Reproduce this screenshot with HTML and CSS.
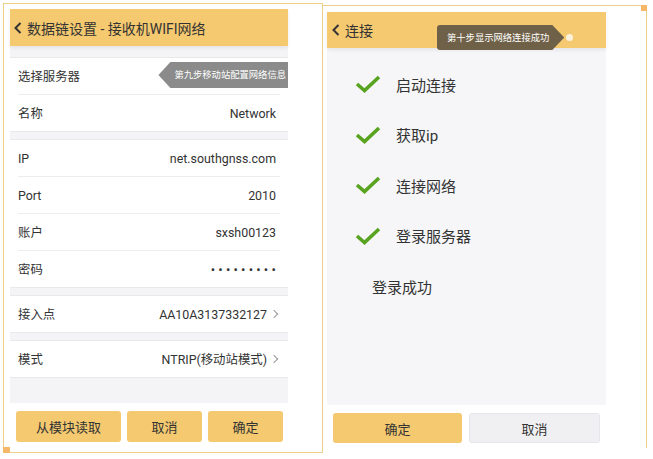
FILE: index.html
```html
<!DOCTYPE html>
<html lang="zh-CN">
<head>
    <meta charset="UTF-8">
    <meta name="viewport" content="width=device-width, initial-scale=1.0">
    <title>接收机WIFI网络</title>
    <link rel="stylesheet" href="styles.css">
</head>
<body>
    <div class="frame frame-left">
        <div class="screen">
            <div class="header">
                <svg class="back" width="8" height="12" viewBox="0 0 8 12"><polyline points="6.5,1 1.5,6 6.5,11" fill="none" stroke="#333" stroke-width="2"/></svg>
                <span>数据链设置 - 接收机WIFI网络</span>
            </div>
            <div class="gap gap-top"></div>
            <div class="section">
                <div class="row tip-row">
                    <span>选择服务器</span>
                    <div class="tip tip-gray">第九步移动站配置网络信息</div>
                </div>
                <div class="row"><span>名称</span><span>Network</span></div>
            </div>
            <div class="gap"></div>
            <div class="section">
                <div class="row"><span>IP</span><span>net.southgnss.com</span></div>
                <div class="row"><span>Port</span><span>2010</span></div>
                <div class="row"><span>账户</span><span>sxsh00123</span></div>
                <div class="row"><span>密码</span><span class="dots">•••••••••</span></div>
            </div>
            <div class="gap"></div>
            <div class="section">
                <div class="row"><span>接入点</span><span class="link">AA10A3137332127 <i class="arrow"></i></span></div>
            </div>
            <div class="gap"></div>
            <div class="section">
                <div class="row"><span>模式</span><span class="link">NTRIP(移动站模式) <i class="arrow"></i></span></div>
            </div>
            <div class="gap gap-bottom"></div>
            <div class="buttons">
                <button class="btn btn-read">从模块读取</button>
                <button class="btn btn-small">取消</button>
                <button class="btn btn-small">确定</button>
            </div>
        </div>
    </div>

    <div class="frame frame-right">
        <div class="screen">
            <div class="header">
                <svg class="back" width="8" height="12" viewBox="0 0 8 12"><polyline points="6.5,1 1.5,6 6.5,11" fill="none" stroke="#333" stroke-width="2"/></svg>
                <span>连接</span>
                <div class="tip tip-dark">第十步显示网络连接成功</div>
                <i class="dot"></i>
            </div>
            <div class="steps">
                <div class="step">
                    <svg class="check" width="26" height="18" viewBox="0 0 26 18"><polyline points="2,9 9.5,15.5 24,2" fill="none" stroke="#58a31f" stroke-width="3.6"/></svg>
                    <span>启动连接</span>
                </div>
                <div class="step">
                    <svg class="check" width="26" height="18" viewBox="0 0 26 18"><polyline points="2,9 9.5,15.5 24,2" fill="none" stroke="#58a31f" stroke-width="3.6"/></svg>
                    <span>获取ip</span>
                </div>
                <div class="step">
                    <svg class="check" width="26" height="18" viewBox="0 0 26 18"><polyline points="2,9 9.5,15.5 24,2" fill="none" stroke="#58a31f" stroke-width="3.6"/></svg>
                    <span>连接网络</span>
                </div>
                <div class="step">
                    <svg class="check" width="26" height="18" viewBox="0 0 26 18"><polyline points="2,9 9.5,15.5 24,2" fill="none" stroke="#58a31f" stroke-width="3.6"/></svg>
                    <span>登录服务器</span>
                </div>
                <div class="step step-done"><span>登录成功</span></div>
            </div>
            <div class="buttons">
                <button class="btn btn-ok">确定</button>
                <button class="btn btn-cancel">取消</button>
            </div>
        </div>
    </div>
</body>
</html>
```

FILE: styles.css
```css
body {
    margin: 0;
    background-color: #fff;
    font-family: Roboto, "Noto Sans CJK SC", sans-serif;
    color: #333;
    display: flex;
    align-items: flex-start;
}
.frame {
    position: relative;
    box-sizing: border-box;
    border: 1px solid #ead08a;
}
.frame-left {
    width: 320px;
    height: 450px;
    margin: 3px 0 0 3px;
    padding: 5px 0 0 6px;
}
.frame-left::after {
    content: "";
    position: absolute;
    left: -1px;
    bottom: -1px;
    width: 7px;
    height: 6px;
    background-color: #f6b868;
}
.frame-right {
    width: 324px;
    height: 443px;
    margin-top: 5px;
    border-left: none;
    border-bottom: none;
    padding: 6px 0 0 4px;
}
.frame-right::after {
    content: "";
    position: absolute;
    right: -1px;
    top: -1px;
    width: 6px;
    height: 6px;
    background-color: #f6b868;
}
.screen {
    width: 278px;
    display: flex;
    flex-direction: column;
}
.frame-right .screen {
    width: 279px;
}
.header {
    position: relative;
    height: 37px;
    background-color: #f4c96f;
    display: flex;
    align-items: center;
    padding-left: 4px;
    font-size: 14px;
    color: #333;
    box-shadow: 0 2px 4px rgba(0, 0, 0, 0.07);
    z-index: 1;
}
.header .back {
    margin-right: 5px;
}
.frame-right .header {
    height: 36px;
    padding-left: 5px;
}
.gap {
    height: 7px;
    background-color: #f4f4f6;
}
.gap-top {
    height: 11px;
}
.gap-bottom {
    height: 25px;
}
.section {
    background-color: #fff;
    border-top: 1px solid #e9e9ec;
    border-bottom: 1px solid #e9e9ec;
}
.row {
    position: relative;
    height: 36px;
    margin: 0 8px;
    padding-right: 4px;
    display: flex;
    align-items: center;
    justify-content: space-between;
    font-size: 12.4px;
    color: #333;
    border-bottom: 1px solid #ededf0;
}
.row:last-child {
    border-bottom: none;
}
.dots {
    font-size: 13px;
    letter-spacing: 3.2px;
    margin-right: -3px;
}
.link {
    display: flex;
    align-items: center;
    margin-right: -3px;
}
.arrow {
    display: inline-block;
    width: 5px;
    height: 5px;
    margin-left: 4px;
    margin-right: 2px;
    border-top: 1px solid #999;
    border-right: 1px solid #999;
    transform: rotate(45deg);
}
.tip {
    position: absolute;
    color: #fff;
    font-size: 9.3px;
    white-space: nowrap;
}
.tip-gray {
    right: -8px;
    top: 4px;
    height: 26px;
    line-height: 26px;
    padding: 0 2px 0 16px;
    background-color: #8b8b8b;
    clip-path: polygon(12px 0, 100% 0, 100% 100%, 12px 100%, 0 50%);
}
.tip-dark {
    left: 110px;
    top: 13px;
    height: 25px;
    line-height: 25px;
    padding: 0 15px 0 10px;
    background-color: #6f6148;
    border-radius: 3px 0 0 3px;
    clip-path: polygon(0 0, calc(100% - 12px) 0, 100% 50%, calc(100% - 12px) 100%, 0 100%);
}
.dot {
    position: absolute;
    left: 239px;
    top: 22px;
    width: 7px;
    height: 7px;
    border-radius: 50%;
    background-color: #fbf1dc;
}
.buttons {
    display: flex;
    gap: 6px;
    padding: 8px 5px 0 6px;
}
.btn {
    height: 31px;
    border: none;
    border-radius: 3px;
    background-color: #f4c96f;
    color: #333;
    font-family: Roboto, "Noto Sans CJK SC", sans-serif;
    font-size: 13px;
    padding: 0;
}
.btn-read {
    width: 105px;
}
.btn-small {
    width: 75px;
}
.steps {
    height: 357px;
    background-color: #f6f6f8;
    padding-top: 11px;
    box-sizing: border-box;
}
.step {
    height: 50.5px;
    display: flex;
    align-items: center;
    padding-left: 28px;
    font-size: 15px;
    color: #333;
}
.step .check {
    margin-right: 15px;
}
.step-done {
    padding-left: 45px;
}
.frame-right .buttons {
    gap: 7px;
    padding: 8px 6px 0 6px;
}
.frame-right .btn {
    flex: 1;
    height: 30px;
}
.btn-cancel {
    background-color: #f0f0f2;
    border: 1px solid #e6e6ea;
}
```
